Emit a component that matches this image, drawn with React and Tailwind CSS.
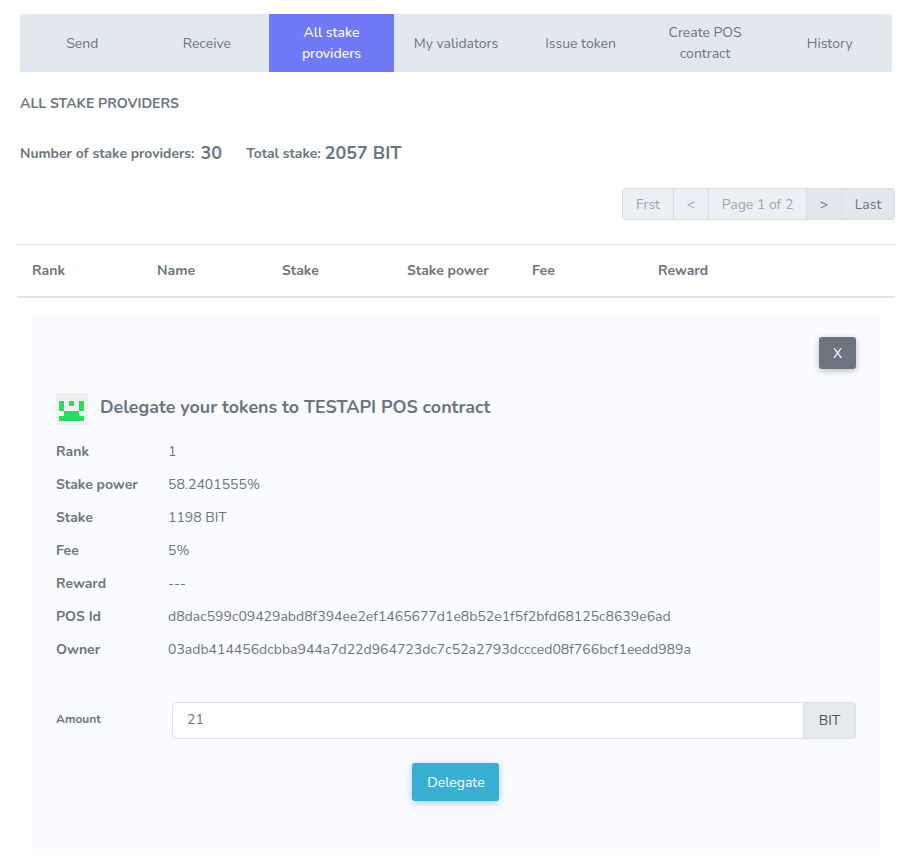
import React from 'react';

const tabs = ['Send', 'Receive', 'All stake providers', 'My validators', 'Issue token', 'Create POS contract', 'History'];

const details = [
  ['Rank', '1'],
  ['Stake power', '58.2401555%'],
  ['Stake', '1198 BIT'],
  ['Fee', '5%'],
  ['Reward', '---'],
  ['POS Id', 'd8dac599c09429abd8f394ee2ef1465677d1e8b52e1f5f2bfd68125c8639e6ad'],
  ['Owner', '03adb414456dcbba944a7d22d964723dc7c52a2793dccced08f766bcf1eedd989a'],
];

const columns = ['Rank', 'Name', 'Stake', 'Stake power', 'Fee', 'Reward'];

const Identicon = () => (
  <svg width="32" height="32" viewBox="0 0 32 32" className="shrink-0">
    <rect width="32" height="32" fill="#f0f0f0" />
    <g fill="#26dc62">
      <rect x="3" y="8" width="5" height="10" />
      <rect x="13" y="8" width="5" height="5" />
      <rect x="23" y="8" width="5" height="10" />
      <rect x="8" y="18" width="15" height="5" />
      <rect x="3" y="23" width="25" height="5" />
    </g>
  </svg>
);

const App = () => {
  return (
    <div className="h-[863px] overflow-hidden bg-white font-['Nunito','Lato','Noto_Sans',sans-serif] text-[14px] text-[#6c757d]">
      {/* Tabs */}
      <div className="pt-[14px] pl-5 pr-[21px]">
        <div className="grid h-[58px] grid-cols-7 bg-[#e2e8ee]">
          {tabs.map((tab) => (
            <div
              key={tab}
              className={`flex items-center justify-center px-4 text-center text-[14px] leading-[21px] ${
                tab === 'All stake providers' ? 'bg-[#7079f6] font-medium text-white' : ''
              }`}
            >
              {tab}
            </div>
          ))}
        </div>
      </div>

      <h1 className="mt-6 pl-5 text-[14px] leading-4 font-bold uppercase">All stake providers</h1>

      {/* Stats */}
      <div className="mt-[29px] flex h-6 items-center pl-5 font-bold">
        <span className="pt-0.5 text-[13.9px]">Number of stake providers:</span>
        <span className="ml-[6px] text-[18px]">30</span>
        <span className="ml-[24px] pt-0.5 text-[13.9px]">Total stake:</span>
        <span className="ml-[4px] text-[18px]">2057 BIT</span>
      </div>

      {/* Pagination */}
      <div className="mt-[23px] flex justify-end pr-[18px]">
        <div className="flex h-8 overflow-hidden rounded-[3px] border border-[#d5dfe6] text-[14px]">
          <span className="flex w-[51px] items-center justify-center border-r border-[#d5dfe6] bg-[#ebf0f4] text-[#a0a8af]">Frst</span>
          <span className="flex w-[35px] items-center justify-center border-r border-[#d5dfe6] bg-[#ebf0f4] text-[#a0a8af]">&lt;</span>
          <span className="flex w-[98px] items-center justify-center border-r border-[#d5dfe6] bg-[#ebf0f4] text-[#a0a8af]">Page 1 of 2</span>
          <span className="flex w-[35px] items-center justify-center border-r border-[#d5dfe6] bg-[#e2e8ee]">&gt;</span>
          <span className="flex w-[52px] items-center justify-center bg-[#e2e8ee]">Last</span>
        </div>
      </div>

      {/* Table header */}
      <div className="mt-6 ml-[17px] mr-[18px] grid h-[54px] grid-cols-[125px_125px_125px_125px_126px_1fr] items-center border-t border-b-2 border-t-[#e4e7ea] border-b-[#e4e7ea] pl-[15px] font-bold">
        {columns.map((col) => (
          <span key={col} className="text-[14px]">{col}</span>
        ))}
      </div>

      {/* Delegate panel */}
      <div className="mt-4 ml-8 mr-[33px] h-[535px] bg-[#f9fbff] px-6 pt-[23px]">
        <div className="flex justify-end">
          <button className="h-8 w-[37px] rounded-[3px] bg-[#6c757d] text-[14px] text-white shadow-[0_2px_6px_rgba(0,0,0,0.25)]">X</button>
        </div>

        <div className="mt-6 flex items-center gap-3">
          <Identicon />
          <h2 className="pb-1 text-[17.85px] leading-5 font-bold">Delegate your tokens to TESTAPI POS contract</h2>
        </div>

        <div className="mt-[10px]">
          {details.map(([label, value]) => (
            <div key={label} className="flex h-[33px] items-center">
              <span className="w-28 text-[14px] font-bold">{label}</span>
              <span className="text-[14.03px]">{value}</span>
            </div>
          ))}
        </div>

        {/* Amount */}
        <div className="mt-9 flex items-center">
          <label className="w-[116px] pb-[3px] text-[12px] font-bold">Amount</label>
          <div className="flex h-[37px] flex-1">
            <input
              readOnly
              value="21"
              className="min-w-0 flex-1 rounded-l-[4px] border border-[#dfe2e8] bg-white px-[14px] pb-0.5 text-[14px] text-[#6c757d] outline-none"
            />
            <span className="flex w-[52px] items-center justify-center rounded-r-[4px] border border-l-0 border-[#dfe2e8] bg-[#e7eaed] text-[14px] text-[#495057]">BIT</span>
          </div>
        </div>

        <div className="mt-6 flex justify-center">
          <button className="ml-[-1px] h-[38px] w-[87px] rounded-[3px] bg-[#39afd1] pl-px text-[14px] text-white shadow-[0_2px_6px_rgba(57,175,209,0.5)]">Delegate</button>
        </div>
      </div>
    </div>
  );
};

export default App;
